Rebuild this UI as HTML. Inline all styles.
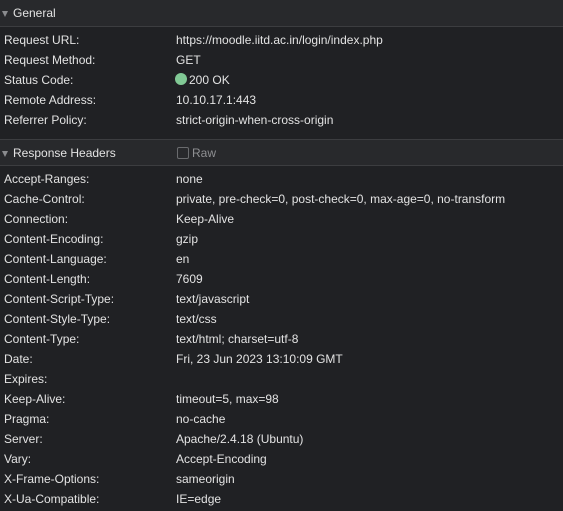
<!DOCTYPE html>
<html><head><style>
html,body{margin:0;padding:0;width:563px;height:511px;overflow:hidden;background:#202124;}
body{font-family:"Liberation Sans",sans-serif;font-size:12px;color:#e3e3e3;position:relative;}
.hdr{position:absolute;left:0;width:563px;height:26px;background:#28292c;border-top:1px solid #3c3d40;border-bottom:1px solid #3c3d40;box-sizing:border-box;}
.hdr span{position:absolute;top:6px;}
.tri{position:absolute;left:2px;top:11px;width:0;height:0;border-left:3.5px solid transparent;border-right:3.5px solid transparent;border-top:6px solid #8a8b8e;}
.row{position:absolute;left:0;height:20px;line-height:20px;white-space:nowrap;}
.row .k{position:absolute;left:4px;}
.row .v{position:absolute;left:176px;}
.dot{display:inline-block;width:12px;height:12px;border-radius:50%;background:#81c995;vertical-align:-1px;margin-right:2px;margin-left:0}
.cb{position:absolute;left:177px;top:7px;width:10px;height:10px;border:1px solid #6a6b6e;border-radius:2px;}
</style></head><body>
<div class="hdr" style="top:0;border-top:none;height:27px"><div class="tri"></div><span style="left:13px">General</span></div>
<div class="row" style="top:30px"><span class="k">Request URL:</span><span class="v">https://moodle.iitd.ac.in/login/index.php</span></div>
<div class="row" style="top:50px"><span class="k">Request Method:</span><span class="v">GET</span></div>
<div class="row" style="top:70px"><span class="k">Status Code:</span><span class="v" style="left:175px"><span class="dot"></span>200 OK</span></div>
<div class="row" style="top:90px"><span class="k">Remote Address:</span><span class="v">10.10.17.1:443</span></div>
<div class="row" style="top:110px"><span class="k">Referrer Policy:</span><span class="v">strict-origin-when-cross-origin</span></div>
<div class="hdr" style="top:139px;height:27px"><div class="tri"></div><span style="left:13px">Response Headers</span><div class="cb"></div><span style="left:192px;color:#8e8f92">Raw</span></div>
<div class="row" style="top:169px"><span class="k">Accept-Ranges:</span><span class="v">none</span></div>
<div class="row" style="top:189px"><span class="k">Cache-Control:</span><span class="v">private, pre-check=0, post-check=0, max-age=0, no-transform</span></div>
<div class="row" style="top:209px"><span class="k">Connection:</span><span class="v">Keep-Alive</span></div>
<div class="row" style="top:229px"><span class="k">Content-Encoding:</span><span class="v">gzip</span></div>
<div class="row" style="top:249px"><span class="k">Content-Language:</span><span class="v">en</span></div>
<div class="row" style="top:269px"><span class="k">Content-Length:</span><span class="v">7609</span></div>
<div class="row" style="top:289px"><span class="k">Content-Script-Type:</span><span class="v">text/javascript</span></div>
<div class="row" style="top:309px"><span class="k">Content-Style-Type:</span><span class="v">text/css</span></div>
<div class="row" style="top:329px"><span class="k">Content-Type:</span><span class="v">text/html; charset=utf-8</span></div>
<div class="row" style="top:349px"><span class="k">Date:</span><span class="v">Fri, 23 Jun 2023 13:10:09 GMT</span></div>
<div class="row" style="top:369px"><span class="k">Expires:</span><span class="v"></span></div>
<div class="row" style="top:389px"><span class="k">Keep-Alive:</span><span class="v">timeout=5, max=98</span></div>
<div class="row" style="top:409px"><span class="k">Pragma:</span><span class="v">no-cache</span></div>
<div class="row" style="top:429px"><span class="k">Server:</span><span class="v">Apache/2.4.18 (Ubuntu)</span></div>
<div class="row" style="top:449px"><span class="k">Vary:</span><span class="v">Accept-Encoding</span></div>
<div class="row" style="top:469px"><span class="k">X-Frame-Options:</span><span class="v">sameorigin</span></div>
<div class="row" style="top:489px"><span class="k">X-Ua-Compatible:</span><span class="v">IE=edge</span></div>
</body></html>
